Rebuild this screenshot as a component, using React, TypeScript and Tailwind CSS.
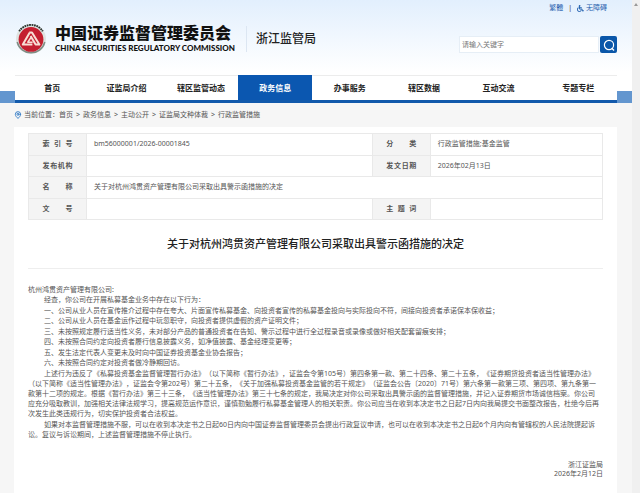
import React from 'react';
import { clsx } from 'clsx';
import { MapPin } from 'lucide-react';
import { FaWheelchair } from 'react-icons/fa';

const menuItems = [
  { href: '#home', label: '首页' },
  { href: '#about', label: '证监局介绍' },
  { href: '#news', label: '辖区监管动态' },
  { href: '#info', label: '政务信息', active: true },
  { href: '#service', label: '办事服务' },
  { href: '#data', label: '辖区数据' },
  { href: '#interact', label: '互动交流' },
  { href: '#special', label: '专题专栏' },
];

const crumbs = ['首页', '政务信息', '主动公开', '证监局文种体裁', '行政监管措施'];

const paragraphs = [
  '经查，你公司在开展私募基金业务中存在以下行为：',
  '一、公司从业人员在宣传推介过程中存在夸大、片面宣传私募基金、向投资者宣传的私募基金投向与实际投向不符，间接向投资者承诺保本保收益；',
  '二、公司从业人员在基金运作过程中玩忽职守，向投资者提供虚假的资产证明文件；',
  '三、未按照规定履行适当性义务，未对部分产品的普通投资者在告知、警示过程中进行全过程录音或录像或做好相关配套留痕安排；',
  '四、未按照合同约定向投资者履行信息披露义务，如净值披露、基金经理变更等；',
  '五、发生法定代表人变更未及时向中国证券投资基金业协会报告；',
  '六、未按照合同约定对投资者做冷静期回访。',
  '上述行为违反了《私募投资基金监督管理暂行办法》（以下简称《暂行办法》，证监会令第105号）第四条第一款、第二十四条、第二十五条，《证券期货投资者适当性管理办法》（以下简称《适当性管理办法》，证监会令第202号）第二十五条，《关于加强私募投资基金监管的若干规定》（证监会公告〔2020〕71号）第六条第一款第三项、第四项、第九条第一款第十二项的规定。根据《暂行办法》第三十三条，《适当性管理办法》第三十七条的规定，我局决定对你公司采取出具警示函的监督管理措施，并记入证券期货市场诚信档案。你公司应充分吸取教训，加强相关法律法规学习，提高规范运作意识，谨慎勤勉履行私募基金管理人的相关职责。你公司应当在收到本决定书之日起7日内向我局提交书面整改报告，杜绝今后再次发生此类违规行为，切实保护投资者合法权益。',
  '如果对本监督管理措施不服，可以在收到本决定书之日起60日内向中国证券监督管理委员会提出行政复议申请，也可以在收到本决定书之日起6个月内向有管辖权的人民法院提起诉讼。复议与诉讼期间，上述监督管理措施不停止执行。',
];

function Emblem() {
  return (
    <svg viewBox="0 0 32 32" className="size-8 shrink-0" aria-hidden="true">
      <circle cx="16" cy="16" r="15" fill="#dfe3e1" />
      <path d="M4.2 8.2 A14.2 14.2 0 0 1 27.8 8.2" fill="none" stroke="#26302c" strokeWidth="1.9" strokeDasharray="1.7 0.7" />
      <path d="M2.2 19 A14.2 14.2 0 0 0 29.8 19" fill="none" stroke="#7f8d86" strokeWidth="1.5" />
      <circle cx="16" cy="16.4" r="12.4" fill="#c41f30" />
      <g fill="none" stroke="#f8dfd6" strokeWidth="2" strokeLinejoin="round">
        <path d="M14.6 9.8 L7.8 21.6 H17.4" />
        <path d="M14.2 9.6 H17 L24.4 21.6 H20.6 L15.6 13" />
        <path d="M16 14.4 L12.8 19.2 H17.6" strokeWidth="1.6" />
      </g>
    </svg>
  );
}

function SearchIcon() {
  return (
    <svg viewBox="0 0 12 12" className="size-3" fill="none" stroke="currentColor" aria-hidden="true">
      <circle cx="6" cy="6" r="4.6" strokeWidth="1.2" />
      <path d="M8.6 9 L11 11.4" strokeWidth="1.4" />
    </svg>
  );
}

function LabelCell({ children }: { children: React.ReactNode }) {
  return (
    <th scope="row" className="border border-[#e9e9e9] bg-[#f4f4f4] p-0 font-bold">
      <span className="mx-auto block w-[30px] [text-align-last:justify]">{children}</span>
    </th>
  );
}

function ValueCell({ children, colSpan }: { children?: React.ReactNode; colSpan?: number }) {
  return (
    <td colSpan={colSpan} className="border border-[#e9e9e9] px-[7px] py-0">
      {children}
    </td>
  );
}

function Header() {
  return (
    <header className="bg-linear-to-b from-[#e2effd] to-white to-70%">
      <div className="flex h-[75px] justify-between pr-[15px] pl-[15px]">
        <div className="flex items-center pt-[2px]">
          <Emblem />
          <div className="ml-2 flex flex-col whitespace-nowrap text-[#111]">
            <span className="text-[16px] leading-[16px] font-black">中国证券监督管理委员会</span>
            <span className="pt-[2px] font-['Lato',sans-serif] text-[8px] leading-[10px] font-black">
              CHINA SECURITIES REGULATORY COMMISSION
            </span>
          </div>
          <span className="ml-[11px] border-l border-[#dce6f2] py-1 pl-[9px] text-[12px] leading-[18px] font-medium text-[#222]">
            浙江监管局
          </span>
        </div>

        <div className="flex flex-col items-end">
          <div className="mt-1 mr-[10px] flex h-2 items-center gap-[5px] text-[7px] leading-[8px] text-[#1f5fae]">
            <a href="#traditional">繁體</a>
            <span className="text-[#333]">|</span>
            <a href="#accessible" className="flex items-center gap-[2px]">
              <FaWheelchair className="size-[7px]" />
              无障碍
            </a>
          </div>
          <form className="mt-6 flex items-center gap-px" onSubmit={(e) => e.preventDefault()}>
            <input
              type="text"
              aria-label="搜索"
              placeholder="请输入关键字"
              className="h-[17px] w-[140px] border border-[#e6eef6] bg-white px-[2px] text-[7px] text-[#333] placeholder:text-[#777]"
            />
            <button type="submit" aria-label="搜索" className="flex size-[17px] items-center justify-center rounded-[2px] bg-[#0b57a9] text-white">
              <SearchIcon />
            </button>
          </form>
        </div>
      </div>

      <div className="bg-linear-to-b from-transparent from-[16px] to-[#6396cf] to-[16px] pr-[15px] pl-[15px]">
        <nav className="grid h-[28px] grid-cols-[repeat(7,74fr)_81fr] border-b-[3px] border-[#1259ab] bg-white text-[8px] font-bold text-[#222]">
          {menuItems.map((item) => (
            <a
              key={item.href}
              href={item.href}
              className={clsx(
                'flex items-center justify-center border-t last:pl-1',
                item.active ? 'border-[#0b57b0] bg-[#0b57b0] text-white' : 'border-[#ececec]',
              )}
            >
              {item.label}
            </a>
          ))}
        </nav>
      </div>
    </header>
  );
}

export default function App() {
  return (
    <div
      lang="zh-CN"
      className="flex min-h-screen bg-[#f0f0f0] font-['Noto_Sans','Noto_Sans_CJK_SC',sans-serif] text-[7px] text-[#555] [text-spacing-trim:space-all]"
    >
      <div className="flex min-w-0 flex-1 flex-col bg-[#f6f6f6]">
        <Header />

        <div className="flex h-6 items-center gap-[2px] px-[14px]">
          <MapPin className="size-2 text-[#3f83c9]" strokeWidth={3} />
          <div className="flex whitespace-nowrap">
            <span>当前位置：</span>
            {crumbs.map((crumb, i) => (
              <React.Fragment key={crumb}>
                {i > 0 && <span className="px-[3px]">&gt;</span>}
                <a href={`#crumb-${i}`}>{crumb}</a>
              </React.Fragment>
            ))}
          </div>
        </div>

        <main className="mr-[15px] ml-[14px] flex-1 bg-white px-[14px] pt-[6px]">
          <table className="h-[87px] w-full table-fixed border-collapse leading-[10px]">
            <colgroup>
              <col className="w-[58px]" />
              <col />
              <col className="w-[58px]" />
              <col className="w-[30%]" />
            </colgroup>
            <tbody>
              <tr>
                <LabelCell>索 引 号</LabelCell>
                <ValueCell>bm56000001/2026-00001845</ValueCell>
                <LabelCell>分 类</LabelCell>
                <ValueCell>行政监管措施;基金监管</ValueCell>
              </tr>
              <tr>
                <LabelCell>发布机构</LabelCell>
                <ValueCell />
                <LabelCell>发文日期</LabelCell>
                <ValueCell>2026年02月13日</ValueCell>
              </tr>
              <tr>
                <LabelCell>名 称</LabelCell>
                <ValueCell colSpan={3}>关于对杭州鸿贯资产管理有限公司采取出具警示函措施的决定</ValueCell>
              </tr>
              <tr>
                <LabelCell>文 号</LabelCell>
                <ValueCell />
                <LabelCell>主 题 词</LabelCell>
                <ValueCell />
              </tr>
            </tbody>
          </table>

          <h1 className="border-b border-[#eee] pt-4 pb-4 text-center text-[11px] leading-[16px] font-medium text-[#222]">
            关于对杭州鸿贯资产管理有限公司采取出具警示函措施的决定
          </h1>

          <article className="pt-4 pr-[2px] leading-[10px]">
            <p>杭州鸿贯资产管理有限公司:</p>
            {paragraphs.map((text) => (
              <p key={text} className="indent-4 odd:pt-px last:pt-px">
                {text}
              </p>
            ))}
          </article>

          <footer className="pt-5 text-right leading-[9px]">
            <p>浙江证监局</p>
            <p>2026年2月12日</p>
          </footer>
        </main>
      </div>

      <div className="flex w-2 justify-center pt-[3px]">
        <svg viewBox="0 0 4 3" className="h-[3px] w-1" aria-hidden="true">
          <path d="M2 0 L4 3 H0 Z" fill="#999" />
        </svg>
      </div>
    </div>
  );
}
